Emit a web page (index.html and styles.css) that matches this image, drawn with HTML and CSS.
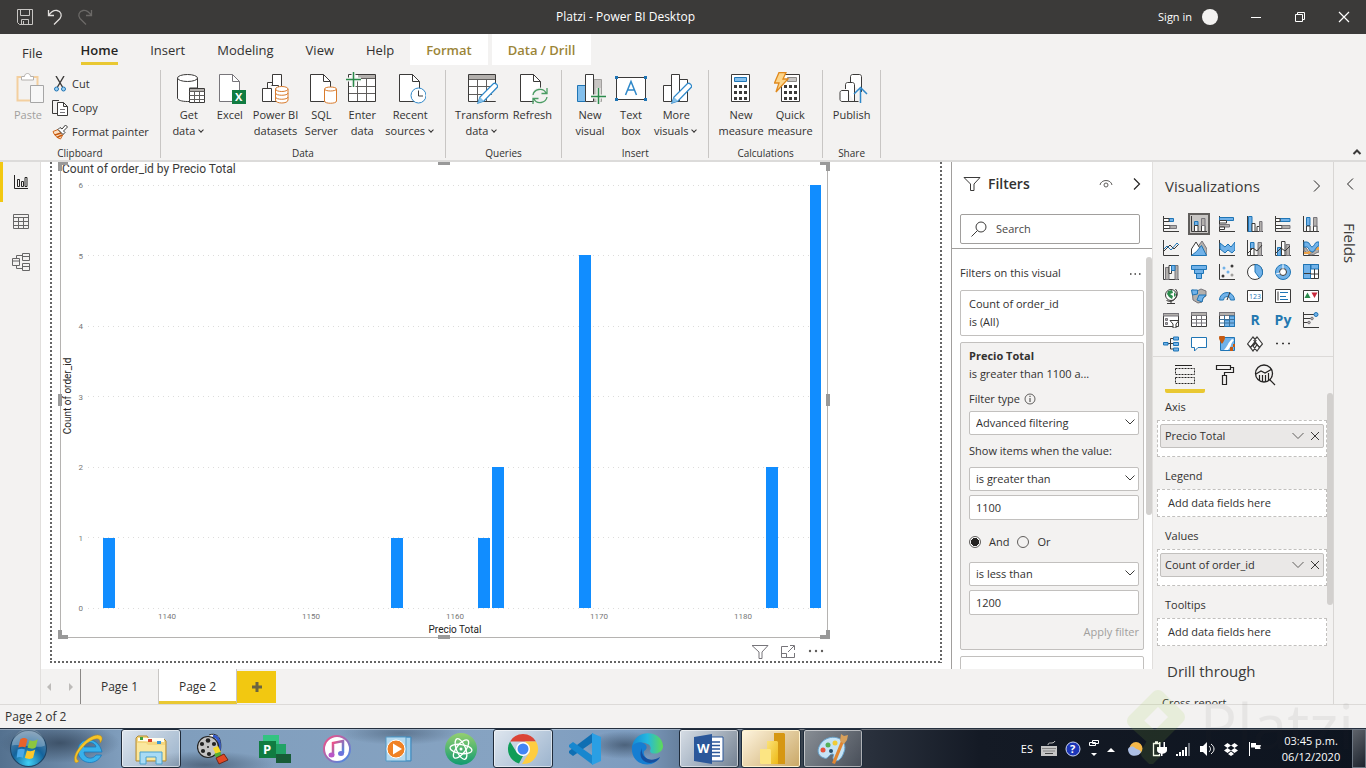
FILE: index.html
```html
<!DOCTYPE html>
<html lang="en">
<head>
    <meta charset="UTF-8">
    <meta name="viewport" content="width=device-width, initial-scale=1.0">
    <title>Platzi - Power BI Desktop</title>
    <link rel="stylesheet" href="styles.css">
</head>
<body>
    <header class="title-bar">
        <div class="quick-tools">
            <button aria-label="Save"><svg width="16" height="16" viewBox="0 0 16 16"><path d="M.5.5h15v15H2.500l-2-2zM3.500.500v6h9v-6M4.500 15.500v-5h7v5M6.500 12v3.500" fill="none" stroke="#c8c6c4"/></svg></button>
            <button aria-label="Undo"><svg width="16" height="16" viewBox="0 0 16 16"><path d="M1.500 1v5.500H7M1.500 6.500C4 3 7 1 10 1.500c4 .6 5.500 5 3 8L7 15.500" fill="none" stroke="#e1dfdd" stroke-width="1.300"/></svg></button>
            <button aria-label="Redo"><svg width="16" height="16" viewBox="0 0 16 16"><path d="M14.500 1v5.500H9M14.500 6.500C12 3 9 1 6 1.500c-4 .6-5.500 5-3 8L9 15.500" fill="none" stroke="#6b6967" stroke-width="1.300"/></svg></button>
        </div>
        <h1 class="window-title">Platzi - Power BI Desktop</h1>
        <div class="window-tools">
            <button class="sign-in">Sign in <span class="avatar"></span></button>
            <button aria-label="Minimize"><svg width="12" height="12" viewBox="0 0 12 12"><path d="M1 6.500h10" stroke="#fff"/></svg></button>
            <button aria-label="Restore"><svg width="12" height="12" viewBox="0 0 12 12"><path d="M1.500 3.500h7v7h-7zM3.500 3V1.500h7v7H9" fill="none" stroke="#fff"/></svg></button>
            <button aria-label="Close"><svg width="12" height="12" viewBox="0 0 12 12"><path d="M1 1l10 10M11 1L1 11" stroke="#fff" stroke-width="1.200"/></svg></button>
        </div>
    </header>

    <nav class="menu-tabs">
        <button class="file-tab">File</button>
        <button class="active">Home</button>
        <button>Insert</button>
        <button>Modeling</button>
        <button>View</button>
        <button>Help</button>
        <button class="context-tab">Format</button>
        <button class="context-tab">Data / Drill</button>
    </nav>

    <section class="ribbon">
        <div class="group">
            <div class="group-items">
                <button class="tool disabled">
                    <svg width="32" height="32" viewBox="0 0 32 32"><path d="M9 5H5.500v23.500h13M21 5h4.500v9" fill="none" stroke="#f3cf9f" stroke-width="2"/><path d="M9.500 8V4.500h3c0-4 6-4 6 0h3V8z" fill="#fff" stroke="#b3b0ad"/><path d="M18.500 13.500h13v17h-13z" fill="#f7f7f7" stroke="#a6a6a6"/></svg>
                    <span>Paste</span>
                </button>
                <div class="small-tools">
                    <button><svg width="16" height="16" viewBox="0 0 16 16"><path d="M4 0l6.500 11M12 0L5.500 11" stroke="#3b3a39" stroke-width="1.400"/><circle cx="4.500" cy="13" r="2" fill="#9cd0f2" stroke="#1f75b5"/><circle cx="11.500" cy="13" r="2" fill="#9cd0f2" stroke="#1f75b5"/></svg>Cut</button>
                    <button><svg width="16" height="16" viewBox="0 0 16 16"><path d="M5 13.500H.5V.5h6.500" fill="none" stroke="#3b3a39"/><path d="M5.500 2.500h6l4 4v9h-10zM11.500 2.500v4h4" fill="#fff" stroke="#3b3a39"/><path d="M8 9.500h5M8 12.500h5" stroke="#77757a"/></svg>Copy</button>
                    <button><svg width="16" height="16" viewBox="0 0 16 16"><path d="M1 7.500L6 5.500l5 5L8.500 15C5 14 2 11 1 7.500z" fill="#fbe0c4" stroke="#d2691e"/><path d="M3 11l6-2M5 13.500l5-2.500" stroke="#c55a11" stroke-width="1.500"/><path d="M6 5.500L8 3.500l2 1.500 3.500-4 2 2L11.500 7l1.500 1.500-2 2z" fill="#fff" stroke="#3b3a39"/></svg>Format painter</button>
                </div>
            </div>
            <div class="group-name">Clipboard</div>
        </div>
        <div class="group roomy">
            <div class="group-items">
                <button class="tool">
                    <svg width="32" height="32" viewBox="0 0 32 32"><path d="M4.500 6v20c0 2 4 3.500 10 3.500h2V16h8V6" fill="#fff" stroke="#3b3a39"/><ellipse cx="14.500" cy="6" rx="10" ry="3.500" fill="#fff" stroke="#3b3a39"/><path d="M16.500 16.500h15v14h-15z" fill="#fff" stroke="#3b3a39"/><path d="M17 17h14v2.500H17z" fill="#b3b0ad"/><path d="M16.500 19.500h15M16.500 23.500h15M16.500 27.500h15M21.500 20v10.500M26.500 20v10.500" stroke="#605e5c"/></svg>
                    <span>Get</span><span>data<i class="caret"></i></span>
                </button>
                <button class="tool">
                    <svg width="32" height="32" viewBox="0 0 32 32"><path d="M5.500 2.500h13l7 7v20h-20z" fill="#fff" stroke="#77757a"/><path d="M18.500 2.500v7h7" fill="none" stroke="#77757a"/><path d="M18 18h14v14H18z" fill="#107c41"/><text x="21" y="29" class="badge-x">X</text></svg>
                    <span>Excel</span>
                </button>
                <button class="tool">
                    <svg width="32" height="32" viewBox="0 0 32 32"><path d="M12.500 14V2.500h9V14M7.500 16v-5.500h5" fill="#fff" stroke="#3b3a39"/><path d="M7.500 16.500V11M2.500 16.500h9v13h-9zM11.500 13.500h7v16h-7" fill="#fff" stroke="#3b3a39"/><path d="M15.500 17v11c0 4 12.500 4 12.500 0V17" fill="#fff" stroke="#d97b2c"/><ellipse cx="21.750" cy="17" rx="6.250" ry="2.500" fill="#fff" stroke="#d97b2c"/><path d="M15.500 21c0 3 12.500 3 12.500 0M15.500 25c0 3 12.500 3 12.500 0" fill="none" stroke="#d97b2c"/></svg>
                    <span>Power BI</span><span>datasets</span>
                </button>
                <button class="tool">
                    <svg width="32" height="32" viewBox="0 0 32 32"><path d="M5.500 2.500h13l7 7v20h-20z" fill="#fff" stroke="#3b3a39"/><path d="M18.500 2.500v7h7" fill="none" stroke="#3b3a39"/><path d="M19.500 17v12c0 3 12 3 12 0V17" fill="#fff" stroke="#d97b2c"/><ellipse cx="25.500" cy="17" rx="6" ry="2" fill="#fff" stroke="#d97b2c"/></svg>
                    <span>SQL</span><span>Server</span>
                </button>
                <button class="tool">
                    <svg width="32" height="32" viewBox="0 0 32 32"><path d="M2.500 2.500h27v27h-27z" fill="#fff" stroke="#3b3a39"/><path d="M12 3h17v3H12z" fill="#b3b0ad"/><path d="M3 14.500h26M3 21.500h26M11.500 7v22M20.500 7v22M12 6.500h17" stroke="#605e5c"/><path d="M0 7.500h15M7.500 0v15" stroke="#f3f2f1" stroke-width="4"/><path d="M0 7.500h15M7.500 0v15" stroke="#2b8a4b" stroke-width="1.500"/></svg>
                    <span>Enter</span><span>data</span>
                </button>
                <button class="tool">
                    <svg width="32" height="32" viewBox="0 0 32 32"><path d="M5.500 2.500h13l7 7v20h-20z" fill="#fff" stroke="#3b3a39"/><path d="M18.500 2.500v7h7" fill="none" stroke="#3b3a39"/><circle cx="24.500" cy="23.500" r="7.500" fill="#fff" stroke="#2f88c9"/><path d="M24.500 18.500v5.500h4.500" fill="none" stroke="#3b3a39"/></svg>
                    <span>Recent</span><span>sources<i class="caret"></i></span>
                </button>
            </div>
            <div class="group-name">Data</div>
        </div>
        <div class="group snug">
            <div class="group-items">
                <button class="tool">
                    <svg width="32" height="32" viewBox="0 0 32 32"><path d="M2.500 2.500h27v27h-27z" fill="#fff" stroke="#3b3a39"/><path d="M3 3h26v4H3z" fill="#b3b0ad"/><path d="M3 14.500h26M3 22.500h26M11.500 7v22M20.500 7v22M3 7.500h26" stroke="#605e5c"/><path d="M23 29h9V9z" fill="#f3f2f1"/><path d="M12 31l2-6L27.500 11.500c2-1 4.500 1.500 4 3.500L18 29z" fill="#fff" stroke="#2f88c9" stroke-width="1.300"/><path d="M12 31l2-6 4 4z" fill="#85c1ea"/></svg>
                    <span>Transform</span><span>data<i class="caret"></i></span>
                </button>
                <button class="tool">
                    <svg width="32" height="32" viewBox="0 0 32 32"><path d="M4.500 2.500h13l7 7v20h-20z" fill="#fff" stroke="#3b3a39"/><path d="M17.500 2.500v7h7" fill="none" stroke="#3b3a39"/><circle cx="24" cy="24" r="8.500" fill="#f3f2f1"/><path d="M17 23c1-6 10-8 13-2M31 16v5.500h-5.500M31 25c-1 6-10 8-13 2M17 32v-5.500h5.500" fill="none" stroke="#4a9c63" stroke-width="1.300"/></svg>
                    <span>Refresh</span>
                </button>
            </div>
            <div class="group-name">Queries</div>
        </div>
        <div class="group roomy">
            <div class="group-items">
                <button class="tool">
                    <svg width="32" height="32" viewBox="0 0 32 32"><path d="M3.500 13.500h8v16h-8z" fill="#83bfec" stroke="#1f75b5"/><path d="M20 7.500h7.500v22H20z" fill="#c8c6c4" stroke="#a19f9d"/><path d="M11.500 2.500h8v27h-8z" fill="#fff" stroke="#3b3a39"/><path d="M17 24.500h15M24.500 16v16" stroke="#f3f2f1" stroke-width="4"/><path d="M17 24.500h15M24.500 16v16" stroke="#2b8a4b" stroke-width="1.500"/></svg>
                    <span>New</span><span>visual</span>
                </button>
                <button class="tool">
                    <svg width="32" height="32" viewBox="0 0 32 32"><path d="M1.500 5.500h29v22h-29z" fill="#fff" stroke="#3b3a39"/><path d="M0 4h3v3H0zM29 4h3v3h-3zM0 26h3v3H0zM29 26h3v3h-3z" fill="#1f75b5"/><path d="M10.500 23L16 9.500 21.500 23M12.500 18h7" fill="none" stroke="#2f88c9" stroke-width="1.500"/></svg>
                    <span>Text</span><span>box</span>
                </button>
                <button class="tool">
                    <svg width="32" height="32" viewBox="0 0 32 32"><path d="M3.500 13.500h8v16h-8zM19.500 7.500h8v22h-8zM11.500 2.500h8v27h-8z" fill="#fff" stroke="#3b3a39"/><path d="M12 31l2-6L27.500 11.500c2-1 4.500 1.500 4 3.500L18 29z" fill="#fff" stroke="#2f88c9" stroke-width="1.300"/><path d="M12 31l2-6 4 4z" fill="#85c1ea"/></svg>
                    <span>More</span><span>visuals<i class="caret"></i></span>
                </button>
            </div>
            <div class="group-name">Insert</div>
        </div>
        <div class="group snug">
            <div class="group-items">
                <button class="tool">
                    <svg width="32" height="32" viewBox="0 0 32 32"><path d="M6.500 2.500h18v27h-18z" fill="#fff" stroke="#3b3a39"/><path d="M9.500 5.500h12v4h-12z" fill="#83bfec" stroke="#1f75b5"/><path d="M9 14.500h13M9 20.500h13M9 26.500h13" stroke="#3b3a39" stroke-width="3" stroke-dasharray="3 2"/></svg>
                    <span>New</span><span>measure</span>
                </button>
                <button class="tool">
                    <svg width="32" height="32" viewBox="0 0 32 32"><path d="M7.500 2.500h18v27h-18z" fill="#fff" stroke="#3b3a39"/><path d="M13.500 5.500h9v4h-9z" fill="#c8c6c4" stroke="#8a8886"/><path d="M10 14.500h13M10 20.500h13M10 26.500h13" stroke="#3b3a39" stroke-width="3" stroke-dasharray="3 2"/><path d="M5 .5h7L9 7h5L2 20l3-9H.5z" fill="#fcd58a" stroke="#e08a1e" stroke-width="1.300"/></svg>
                    <span>Quick</span><span>measure</span>
                </button>
            </div>
            <div class="group-name">Calculations</div>
        </div>
        <div class="group">
            <div class="group-items">
                <button class="tool">
                    <svg width="32" height="32" viewBox="0 0 32 32"><path d="M14.500 11V4.500c0-1 1-2 2-2h7c1 0 2 1 2 2V20M9.500 17v-4.500c0-1 1-2 2-2h5c1 0 2 1 2 2v17" fill="#fff" stroke="#3b3a39"/><path d="M6 18.500h6.500v11H6c-1 0-2-1-2-2v-7c0-1 1-2 2-2zM12.500 29.500h10" fill="#fff" stroke="#3b3a39"/><path d="M24.500 31V17M18 22l6.500-6.500L31 22" fill="none" stroke="#2f88c9" stroke-width="1.500"/></svg>
                    <span>Publish</span>
                </button>
            </div>
            <div class="group-name">Share</div>
        </div>
        <button class="collapse" aria-label="Collapse ribbon"><svg width="10" height="8" viewBox="0 0 10 8"><path d="M1.500 6L5 2.500 8.500 6" fill="none" stroke="#3b3a39" stroke-width="2"/></svg></button>
    </section>

    <main class="workspace">
        <nav class="view-rail">
            <button class="active" aria-label="Report view"><svg width="16" height="16" viewBox="0 0 16 16"><path d="M1.500 1v13.500H15M4.500 5.500h2v7h-2zM8.500 7.500h2v5h-2zM12 3.500h2v9h-2z" fill="none" stroke="#252423"/></svg></button>
            <button aria-label="Data view"><svg width="18" height="16" viewBox="0 0 18 16"><path d="M1.500.5h15v14h-15zM1 3.500h16M1 7.500h16M1 11.500h16M6.500 4v11M11.500 4v11" fill="none" stroke="#666"/></svg></button>
            <button aria-label="Model view"><svg width="20" height="18" viewBox="0 0 20 18"><path d="M1.500 5.500h7v7h-7zM1 8h8M11.500.5h7v7h-7zM11 3.500h8M11.500 10.500h7v7h-7zM11 13.500h8M5.500 5V2.500H11M5.500 13v2.500H11" fill="none" stroke="#666"/></svg></button>
        </nav>

        <div class="report">
            <div class="report-top">
                <section class="canvas">
                    <div class="report-page">
                        <svg class="chart" viewBox="0 0 772 478" role="img" aria-label="Count of order_id by Precio Total">
                            <path class="frame" d="M2.500 1V475.500H769.500V1"/>
                            <text class="chart-title" x="4" y="11">Count of order_id by Precio Total</text>
                            <g class="grid">
                                <path d="M30 23.500H764M30 93.500H764M30 164.500H764M30 234.500H764M30 305.500H764M30 375.500H764M30 446.500H764"/>
                            </g>
                            <g class="ticks-y">
                                <text x="25" y="26">6</text>
                                <text x="25" y="97">5</text>
                                <text x="25" y="167">4</text>
                                <text x="25" y="238">3</text>
                                <text x="25" y="308">2</text>
                                <text x="25" y="379">1</text>
                                <text x="25" y="449">0</text>
                            </g>
                            <g class="bars">
                                <rect x="45" y="376" width="12" height="70"/>
                                <rect x="333" y="376" width="12" height="70"/>
                                <rect x="420" y="376" width="12" height="70"/>
                                <rect x="434" y="305" width="12" height="141"/>
                                <rect x="521" y="93" width="12" height="353"/>
                                <rect x="708" y="305" width="12" height="141"/>
                                <rect x="752" y="23" width="11" height="423"/>
                            </g>
                            <g class="ticks-x">
                                <text x="109" y="457">1140</text>
                                <text x="253" y="457">1150</text>
                                <text x="397" y="457">1160</text>
                                <text x="541" y="457">1170</text>
                                <text x="685" y="457">1180</text>
                            </g>
                            <text class="axis-name" x="397" y="471">Precio Total</text>
                            <text class="axis-name" transform="translate(13 234) rotate(-90)">Count of order_id</text>
                            <path class="handles" d="M0 0h10v3H4v6H0zM772 0h-10v3h6v6h4zM0 477h10v-4H4v-5H0zM772 477h-10v-4h6v-5h4zM380 0h12v3h-12zM380 473h12v4h-12zM0 232h4v12H0zM768 232h4v12h-4z"/>
                        </svg>
                        <div class="visual-tools">
                            <button aria-label="Filters"><svg width="18" height="16" viewBox="0 0 18 16"><path d="M1 1.500h16L11 8v6.500H8V8z" fill="none" stroke="#77757a"/></svg></button>
                            <button aria-label="Focus mode"><svg width="16" height="16" viewBox="0 0 16 16"><path d="M8 2.500H1.500v11h13V9M1.500 9.500h5v4M8 8l6-6M10 1.500h4.500V6" fill="none" stroke="#77757a"/></svg></button>
                            <button aria-label="More options"><svg width="18" height="16" viewBox="0 0 18 16"><g fill="#605e5c"><circle cx="3" cy="7" r="1.200"/><circle cx="9" cy="7" r="1.200"/><circle cx="15" cy="7" r="1.200"/></g></svg></button>
                        </div>
                    </div>
                </section>

                <aside class="filters">
                    <div class="filters-head">
                        <svg width="18" height="16" viewBox="0 0 18 16"><path d="M1 1.500h16L11 8v6.500H7.500V8z" fill="none" stroke="#3b3a39"/></svg>
                        <h2>Filters</h2>
                        <button aria-label="Hide filter pane"><svg width="14" height="10" viewBox="0 0 14 10"><path d="M1 6c1-6 11-6 12 0" fill="none" stroke="#605e5c"/><circle cx="7" cy="6" r="2" fill="none" stroke="#605e5c"/></svg></button>
                        <button aria-label="Collapse filters"><svg width="8" height="14" viewBox="0 0 8 14"><path d="M1 1.500L6.500 7 1 12.500" fill="none" stroke="#252423" stroke-width="1.200"/></svg></button>
                    </div>
                    <label class="search">
                        <svg width="16" height="16" viewBox="0 0 16 16"><circle cx="10" cy="6" r="5" fill="none" stroke="#3b3a39"/><path d="M6.500 9.500L.5 15.500" stroke="#3b3a39"/></svg>
                        <input type="text" placeholder="Search" aria-label="Search filters">
                    </label>
                    <div class="filter-list">
                        <div class="filter-section">
                            <span>Filters on this visual</span>
                            <button aria-label="More options"><svg width="12" height="8" viewBox="0 0 12 8"><path d="M1 5h1.500M5.500 5H7M10 5h1.500" stroke="#3b3a39" stroke-width="1.500"/></svg></button>
                        </div>
                        <div class="card">
                            <p>Count of order_id</p>
                            <p>is (All)</p>
                        </div>
                        <form class="card open">
                            <p class="field-name">Precio Total</p>
                            <p>is greater than 1100 a...</p>
                            <label class="caption" for="filter-type">Filter type <svg width="12" height="12" viewBox="0 0 12 12"><circle cx="6" cy="6" r="5" fill="none" stroke="#3b3a39" stroke-width=".8"/><path d="M6 5v4M6 2.800v1.200" stroke="#3b3a39"/></svg></label>
                            <div class="select-box"><select id="filter-type"><option>Advanced filtering</option></select><svg width="10" height="6" viewBox="0 0 10 6"><path d="M.5.5L5 5 9.500.5" fill="none" stroke="#3b3a39"/></svg></div>
                            <label class="caption show-items" for="first-rule">Show items when the value:</label>
                            <div class="select-box"><select id="first-rule"><option>is greater than</option></select><svg width="10" height="6" viewBox="0 0 10 6"><path d="M.5.5L5 5 9.500.5" fill="none" stroke="#3b3a39"/></svg></div>
                            <input class="value" type="text" value="1100" aria-label="First value">
                            <div class="joiner">
                                <label><input type="radio" name="join" checked> And</label>
                                <label><input type="radio" name="join"> Or</label>
                            </div>
                            <div class="select-box"><select aria-label="Second rule"><option>is less than</option></select><svg width="10" height="6" viewBox="0 0 10 6"><path d="M.5.5L5 5 9.500.5" fill="none" stroke="#3b3a39"/></svg></div>
                            <input class="value" type="text" value="1200" aria-label="Second value">
                            <button class="apply" type="button">Apply filter</button>
                        </form>
                        <div class="card next"></div>
                        <span class="scroll-thumb"></span>
                    </div>
                </aside>
            </div>

            <nav class="page-tabs">
                <div class="page-arrows">
                    <button aria-label="Previous page"><svg width="6" height="10" viewBox="0 0 6 10"><path d="M5 1v8L1 5z" fill="#bdbbb9"/></svg></button>
                    <button aria-label="Next page"><svg width="6" height="10" viewBox="0 0 6 10"><path d="M1 1v8l4-4z" fill="#bdbbb9"/></svg></button>
                </div>
                <button class="page">Page 1</button>
                <button class="page current">Page 2</button>
                <button class="add-page" aria-label="New page"><svg width="12" height="12" viewBox="0 0 12 12"><path d="M6 1v10M1 6h10" stroke="#6b6440" stroke-width="3"/></svg></button>
            </nav>
        </div>

        <aside class="visuals">
            <div class="visuals-head">
                <h2>Visualizations</h2>
                <button aria-label="Collapse visualizations"><svg width="8" height="14" viewBox="0 0 8 14"><path d="M1 1.500L6.500 7 1 12.500" fill="none" stroke="#252423"/></svg></button>
            </div>
            <div class="visual-grid">
                <button aria-label="Stacked bar chart"><svg viewBox="0 0 16 16"><path class="ax" d="M.5 0v15.500H16"/><path class="b" d="M6 2.500h4.500v3H6z"/><path class="w" d="M.5 2.500H6v3H.5zM.5 9.500H7v3H.5z"/><path class="g" d="M7 9.500h6.500v3H7z"/></svg></button>
                <button class="picked" aria-label="Stacked column chart"><svg viewBox="0 0 16 16"><path class="ax" d="M.5 0v15.500H16"/><path class="b" d="M3.500 5.500h3.500v4H3.500z"/><path class="w" d="M3.500 9.500H7v6H3.500zM10.500 9.500H14v6h-3.500z"/><path class="g" d="M10.500 2.500H14v7h-3.500z"/></svg></button>
                <button aria-label="Clustered bar chart"><svg viewBox="0 0 16 16"><path class="ax" d="M.5 0v15.500H16"/><path class="b" d="M.5 1.500h14v3H.5z"/><path class="w" d="M.5 4.500h7v2.500h-7z"/><path class="g" d="M.5 8.500h10v2.500H.5z"/><path class="w" d="M.5 11h5v2.500h-5z"/></svg></button>
                <button aria-label="Clustered column chart"><svg viewBox="0 0 16 16"><path class="ax" d="M.5 0v15.500H16"/><path class="b" d="M1.500.5h3.500v15H1.500z"/><path class="w" d="M5 7.500h3v8H5zM10 10.500h2.500v5H10z"/><path class="g" d="M12.500 5.500H15v10h-2.500z"/></svg></button>
                <button aria-label="100% stacked bar chart"><svg viewBox="0 0 16 16"><path class="ax" d="M.5 0v15.500H16"/><path class="b" d="M5 2.500h10v3H5z"/><path class="w" d="M.5 2.500H5v3H.5zM.5 9.500H7v3H.5z"/><path class="g" d="M7 9.500h8v3H7z"/></svg></button>
                <button aria-label="100% stacked column chart"><svg viewBox="0 0 16 16"><path class="ax" d="M.5 0v15.500H16"/><path class="b" d="M3.500 1.500H7v8H3.500z"/><path class="w" d="M3.500 10H7v5.500H3.500zM10.500 10H14v5.500h-3.500z"/><path class="g" d="M10.500 1.500H14V10h-3.500z"/></svg></button>

                <button aria-label="Line chart"><svg viewBox="0 0 16 16"><path class="ax" d="M.5 0v15.500H16M1 11l6-6 4 4 5-5"/><path class="bl" d="M1 9l3-3 4 4 6-7 2 2"/></svg></button>
                <button aria-label="Area chart"><svg viewBox="0 0 16 16"><path class="g" d="M1 15l10-14 5 8v6z"/><path class="w" d="M.5 15.500V9L5 2l5 8v5.500z"/><path class="b" d="M.5 15.500l5-4 5-6 5 10z"/></svg></button>
                <button aria-label="Stacked area chart"><svg viewBox="0 0 16 16"><path class="ax" d="M.5 0v15.500H16"/><path class="b" d="M1 3l5 4 3-3 3 3 4-5v8l-3 3-4-3-3 3-5-4z"/></svg></button>
                <button aria-label="Line and stacked column chart"><svg viewBox="0 0 16 16"><path class="ax" d="M.5 0v15.500H16"/><path class="b" d="M3.500 2.500H7v6H3.500z"/><path class="w" d="M3.500 8.500H7v7H3.500z"/><path class="g" d="M11 2.500h3.500v13H11z"/><path class="ax" d="M1 13l5-5 4 3 5-6"/></svg></button>
                <button aria-label="Line and clustered column chart"><svg viewBox="0 0 16 16"><path class="ax" d="M.5 0v15.500H16"/><path class="b" d="M2.500 7.500H6v8H2.500z"/><path class="w" d="M6.500 1.500H10v14H6.500z"/><path class="g" d="M11 4.500h3.500v11H11z"/><path class="ax" d="M1 13l5-5 4 3 5-5"/></svg></button>
                <button aria-label="Ribbon chart"><svg viewBox="0 0 16 16"><path class="ax" d="M.5 0v15.500H16"/><path class="g" d="M1 7c3 0 4 6 7 6s5-5 8-5v4c-3 0-4 3-8 3s-4-4-7-4z"/><path class="o" d="M1 12h3c3 0 5-5 8-5h4v3h-4c-2 0-4 4-7 4H1z"/><path class="b" d="M1 2h3c3 0 3 5 5 5s3-5 5-5h2v4c-3 0-4 6-7 6s-3-5-5-5H1z"/></svg></button>

                <button aria-label="Waterfall chart"><svg viewBox="0 0 16 16"><path class="ax" d="M.5 0v15.500H16"/><path class="g" d="M2.500 3.500H6v12H2.500zM12 1.500h3v14h-3z"/><path class="w" d="M6 1.500h2.500v8H6z"/><path class="b" d="M8.500 1.500H12v5H8.500z"/></svg></button>
                <button aria-label="Funnel chart"><svg viewBox="0 0 16 16"><path class="b" d="M.5 1.500h15v4H.5zM3.500 5.500h9v4h-9zM5.500 9.500h5v5h-5z"/></svg></button>
                <button aria-label="Scatter chart"><svg viewBox="0 0 16 16"><path class="ax" d="M.5 0v15.500H16"/><g fill="#3b3a39"><circle cx="13" cy="2" r="1.500"/><circle cx="4" cy="12" r="1.500"/></g><g fill="#71b2e9"><circle cx="5" cy="4" r="1.500"/><circle cx="9" cy="8" r="1.500"/></g><circle cx="13" cy="11" r="1.500" fill="#a19f9d"/></svg></button>
                <button aria-label="Pie chart"><svg viewBox="0 0 16 16"><circle class="w" cx="8" cy="8" r="7.500"/><path class="b" d="M8 .5A7.500 7.500 0 0 1 12.500 14L8 8z"/></svg></button>
                <button aria-label="Donut chart"><svg viewBox="0 0 16 16"><circle class="b" cx="8" cy="8" r="7.500"/><circle class="w" cx="8" cy="8" r="3.500"/><path d="M8 0v5M1 10l4-1" stroke="#fff"/></svg></button>
                <button aria-label="Treemap"><svg viewBox="0 0 16 16"><path class="w" d="M.5.5h15v14H.5z"/><path class="b" d="M.5.5h7v14h-7zM8 .5h7.500V5H8z"/><path class="ax" d="M1 9.500h7M11.500 5v9.500M8 10h8"/></svg></button>

                <button aria-label="Map"><svg viewBox="0 0 16 16"><circle class="w" cx="8" cy="7" r="5.500"/><path d="M5 3l4-1 1 3-3 1 3 2-1 3-3-2-2-3zM11 4l2 3-2 2z" fill="#2b8a4b"/><path class="ax" d="M12.500 1a7.500 7.500 0 0 1-9 11.500M8 13v2.500M4 15.500h8"/></svg></button>
                <button aria-label="Filled map"><svg viewBox="0 0 16 16"><path class="g" d="M1 2l5 1 4-2 5 2v5l-3 2-1 4-4 1-5-3z"/><path class="b" d="M.5 2h6v4l-5 1zM8 7h7l-3 3-1 4-5-2z"/></svg></button>
                <button aria-label="Gauge"><svg viewBox="0 0 16 16"><path class="b" d="M.5 12a7.500 7.500 0 0 1 15 0h-4a3.500 3.500 0 0 0-7 0z"/><path class="ax" d="M8 12l3-8"/></svg></button>
                <button aria-label="Card"><svg viewBox="0 0 16 16"><path class="w" d="M.5 2.500h15v11H.5z"/><text x="2" y="11" class="digits">123</text></svg></button>
                <button aria-label="Multi-row card"><svg viewBox="0 0 16 16"><path class="w" d="M.5 1.500h15v13H.5z"/><path class="bl" d="M5 4.500h8M5 8.500h6M5 11.500h8"/><path class="ax" d="M3 3.500v9"/></svg></button>
                <button aria-label="KPI"><svg viewBox="0 0 16 16"><path class="w" d="M.5 2.500h15v11H.5z"/><path d="M1.500 10L4.500 4.500 7.500 10z" fill="#2b8a4b"/><path d="M8.500 4.500h6l-3 5.500z" fill="#c8273b"/></svg></button>

                <button aria-label="Slicer"><svg viewBox="0 0 16 16"><path class="w" d="M.5 1.500h15v13H.5z"/><path class="g" d="M.5 1.500h15V4H.5zM2.500 6.500h2v2h-2zM2.500 10.500h2v2h-2z"/><path class="w" d="M7 8.500h9l-3 3.500v4h-3v-4z"/></svg></button>
                <button aria-label="Table"><svg viewBox="0 0 16 16"><path class="w" d="M.5.5h15v14H.5z"/><path class="g" d="M.5.5h15v3H.5z"/><path d="M.5 7.500h15M.5 11h15M5.500 3v11.500M10.500 3v11.500" stroke="#77757a"/></svg></button>
                <button aria-label="Matrix"><svg viewBox="0 0 16 16"><path class="w" d="M.5.5h15v14H.5z"/><path class="g" d="M.5.5h15v3H.5z"/><path class="b" d="M10.500 4h5v10.500h-10V8h5z"/><path d="M.5 7.500h15M.5 11h15M5.500 3v11.500M10.500 3v11.500" stroke="#3b6f98"/></svg></button>
                <button aria-label="R script visual"><b>R</b></button>
                <button aria-label="Python visual"><b>Py</b></button>
                <button aria-label="Key influencers"><svg viewBox="0 0 16 16"><path class="ax" d="M.5 0v15.500H16M1 2.500h10M1 6.500h7M1 10.500h4"/><circle class="b" cx="13" cy="2.500" r="2"/><circle class="g" cx="9" cy="6.500" r="1.300"/><circle class="g" cx="6" cy="10.500" r="1.300"/></svg></button>

                <button aria-label="Decomposition tree"><svg viewBox="0 0 16 16"><path class="ax" d="M5 7.500h5M7.500 2.500v10.500M7.500 2.500H10M7.500 13H10"/><path class="b" d="M.5 6.500H5V9H.5zM10.500 1h5v3h-5zM10.500 6.500h5v3h-5zM10.500 12h5v3h-5z"/></svg></button>
                <button aria-label="Q&amp;A"><svg viewBox="0 0 16 16"><path d="M.5 1.500h15v10H7L3.500 15v-3.500h-3z" fill="#fff" stroke="#1f75b5"/></svg></button>
                <button aria-label="ArcGIS map"><svg viewBox="0 0 16 16"><path class="b" d="M1.500 1.500h14v13h-14z"/><path d="M5 14c4-4 3-6 8-11l2 1c-4 4-2 6-6 10z" fill="#fff"/><path d="M0 2a3 3 0 0 1 6 0c0 2-3 6-3 6S0 4 0 2zM11 11h3v4h-3zM14 8h2v3h-2z" fill="#c55a11"/></svg></button>
                <button aria-label="Power Apps"><svg viewBox="0 0 16 16"><g fill="#fff" stroke="#3b3a39" stroke-width="1.200"><path d="M.5 8L6 1l3 3.500L3.500 11.500zM7 4.500L10 1l5.500 7-3 3.500z"/><path d="M3.500 11.500L8 6l2 2.500L6 15zM12.500 11.500L10 15 6 10l2.500-3z"/></g></svg></button>
                <button aria-label="More visuals"><svg viewBox="0 0 16 16"><path d="M1 7.500h2M7 7.500h2M13 7.500h2" stroke="#3b3a39" stroke-width="1.500"/></svg></button>
            </div>
            <div class="pane-tabs">
                <button class="active" aria-label="Fields"><svg width="22" height="22" viewBox="0 0 22 22"><path d="M1 1.500h17" stroke="#252423"/><path d="M1.500 4.500h19v6h-19zM1.500 13.500h19v6h-19z" fill="none" stroke="#252423" stroke-dasharray="2 1"/></svg></button>
                <button aria-label="Format"><svg width="22" height="22" viewBox="0 0 22 22"><path d="M2.500 1.500h14v4h-14zM16.500 3.500h3v5h-9v3M8.500 11.500h4v9h-4z" fill="none" stroke="#252423" stroke-width="1.200"/></svg></button>
                <button aria-label="Analytics"><svg width="22" height="22" viewBox="0 0 22 22"><circle cx="10" cy="9.500" r="8.500" fill="none" stroke="#252423" stroke-width="1.300"/><path d="M16 16l5 5M2 10l5-3 4 2 7-4M5.500 11v5M8.500 11v7M11.500 11v7M14.500 9v7" fill="none" stroke="#252423" stroke-width="1.200"/></svg></button>
            </div>
            <div class="wells">
                <h3>Axis</h3>
                <div class="well">
                    <div class="chip">Precio Total
                        <button aria-label="Field options"><svg width="12" height="8" viewBox="0 0 12 8"><path d="M.5 1L6 6.500 11.500 1" fill="none" stroke="#605e5c"/></svg></button>
                        <button aria-label="Remove field"><svg width="10" height="10" viewBox="0 0 10 10"><path d="M1 1l8 8M9 1L1 9" stroke="#3b3a39"/></svg></button>
                    </div>
                </div>
                <h3>Legend</h3>
                <div class="well empty">Add data fields here</div>
                <h3>Values</h3>
                <div class="well">
                    <div class="chip">Count of order_id
                        <button aria-label="Field options"><svg width="12" height="8" viewBox="0 0 12 8"><path d="M.5 1L6 6.500 11.500 1" fill="none" stroke="#605e5c"/></svg></button>
                        <button aria-label="Remove field"><svg width="10" height="10" viewBox="0 0 10 10"><path d="M1 1l8 8M9 1L1 9" stroke="#3b3a39"/></svg></button>
                    </div>
                </div>
                <h3>Tooltips</h3>
                <div class="well empty">Add data fields here</div>
                <h2>Drill through</h2>
                <p>Cross-report</p>
                <span class="scroll-thumb"></span>
            </div>
        </aside>

        <aside class="fields">
            <button aria-label="Expand fields"><svg width="8" height="14" viewBox="0 0 8 14"><path d="M7 1.500L1.500 7 7 12.500" fill="none" stroke="#252423"/></svg></button>
            <h2>Fields</h2>
        </aside>
    </main>

    <footer class="status-bar">Page 2 of 2</footer>

    <div class="taskbar">
        <div class="apps">
            <button aria-label="Start"><svg viewBox="0 0 36 36"><defs><radialGradient id="orb" cx=".5" cy=".9" r=".9"><stop offset="0" stop-color="#3fd0f5"/><stop offset=".5" stop-color="#14639c"/><stop offset="1" stop-color="#6b8ba8"/></radialGradient></defs><circle cx="18" cy="18" r="17.500" fill="url(#orb)" stroke="#1d4364"/><path d="M2 15a16 16 0 0 1 32 0c-9 4-22-2-32 0z" fill="#fff" opacity=".25"/><path d="M10 9c3-2 5-1 7 0l-2 8c-2-1-4-1-7 0z" fill="#e8632b"/><path d="M19 10c3 1 5 1 8-1l-2 8c-3 2-5 1-8 0z" fill="#8cc63f"/><path d="M7.500 19c3-1 5-1 7 0l-2 8c-2-1-4-1-6 0z" fill="#4aa8e8"/><path d="M16.500 20c3 1 5 1 8-1l-2 8c-3 2-6 1-8 0z" fill="#fcc82a"/></svg></button>
            <button aria-label="Internet Explorer"><svg viewBox="0 0 32 32"><path d="M29 19H11c0 7 9 8 12 3h5.500C23 34 5 31 5 17.500S25 2 29 19zM11 14h12c-1-6-11-6-12 0z" fill="#38b1ea" stroke="#1879bd" stroke-width=".8"/><path d="M2 29C-2 18 20-3 28 3c2 2 1 5-1 7 1-8-10-3-15 2S0 26 6 28c-2 2-3 2-4 1z" fill="#f6c428" stroke="#bd8810" stroke-width=".5"/></svg></button>
            <button class="running" aria-label="Explorer"><svg viewBox="0 0 32 32"><path d="M1 28V5l2-2h9l2 3h15l2 2v20z" fill="#f5d77e" stroke="#b48b32"/><path d="M3 8V5h26v4z" fill="#fffdf0"/><path d="M5 4h3v3H5z" fill="#3ca13c"/><path d="M13 6h4v3h-4z" fill="#d9452c"/><path d="M22 8h4v3h-4z" fill="#3a96d8"/><path d="M2 10h9l2 2h17v15H2z" fill="#fae79e"/><path d="M5 31V19h22v12h-6v-7H11v7z" fill="#a8dbf5" stroke="#4aa0cc"/></svg></button>
            <button aria-label="Movie player"><svg viewBox="0 0 32 32"><path d="M12 2C26-3 26 18 20 26" fill="#fff" stroke="#222"/><path d="M16 3c8 1 7 12 5 18" fill="none" stroke="#3359c9" stroke-width="3"/><circle cx="11" cy="14" r="10.500" fill="#c5c5c5" stroke="#222" stroke-width="1.200"/><g fill="#222"><circle cx="11" cy="7.500" r="2.300"/><circle cx="5" cy="11" r="2.100"/><circle cx="6" cy="18" r="2.100"/><circle cx="12" cy="21" r="2.100"/><circle cx="17" cy="11" r="2.100"/><circle cx="11" cy="14" r="1"/></g><path d="M16 15l5-2 3 6-5 3z" fill="#f5d928"/><path d="M17 21l6-2 2 4-5 3z" fill="#53ae36"/><path d="M19 25l8-4 4 6-9 4z" fill="#e44924" stroke="#6e281b"/></svg></button>
            <button aria-label="Project"><svg viewBox="0 0 32 32"><path d="M4 2h16v9H4z" fill="#33c481"/><path d="M12 11h15v10H12z" fill="#21a366"/><path d="M17 21h15v9H17z" fill="#185c37"/><path d="M0 8h17v17H0z" fill="#107c41"/><text x="4" y="21" class="logo-letter">P</text></svg></button>
            <button aria-label="iTunes"><svg viewBox="0 0 32 32"><defs><linearGradient id="note" x2="1" y2="1"><stop stop-color="#f74d83"/><stop offset="1" stop-color="#3f8ee8"/></linearGradient></defs><circle cx="16" cy="16" r="13" fill="#fff" stroke="url(#note)" stroke-width="2"/><path d="M12 22V10l10-2v12" fill="none" stroke="url(#note)" stroke-width="2.500"/><ellipse cx="10.500" cy="22" rx="3" ry="2.500" fill="#ba55c7"/><ellipse cx="20" cy="20.500" rx="3" ry="2.500" fill="#6b73dc"/></svg></button>
            <button aria-label="Media player"><svg viewBox="0 0 32 32"><path d="M8 4h20v24H8z" fill="#78b8e2" stroke="#3d86b9"/><path d="M24 5v22M26 5v22" stroke="#d1e9f5"/><path d="M3 4h20v24H3z" fill="#b4d9ef" stroke="#5499c5"/><circle cx="13" cy="16" r="9" fill="#f08124" stroke="#fff"/><path d="M10 10.500v11l9-5.500z" fill="#fff"/></svg></button>
            <button aria-label="Atom"><svg viewBox="0 0 32 32"><defs><linearGradient id="atom" x2="0" y2="1"><stop stop-color="#94cf70"/><stop offset="1" stop-color="#109b70"/></linearGradient></defs><circle cx="16" cy="16" r="16" fill="url(#atom)"/><g fill="none" stroke="#fff" stroke-width="1.300"><ellipse cx="16" cy="16" rx="11" ry="4.500" transform="rotate(8 16 16)"/><ellipse cx="16" cy="16" rx="11" ry="4.500" transform="rotate(68 16 16)"/><ellipse cx="16" cy="16" rx="11" ry="4.500" transform="rotate(128 16 16)"/></g><circle cx="16" cy="16" r="1.500" fill="#fff"/></svg></button>
            <button class="running" aria-label="Chrome"><svg viewBox="0 0 32 32"><path d="M3 8.500a15 15 0 0 1 26 0H16z" fill="#db4437"/><path d="M3 8.500L10 20l6 3-4 7.500A15 15 0 0 1 3 8.500z" fill="#0f9d58"/><path d="M29 8.500a15 15 0 0 1-14 22.500L22.500 19 18 8.500z" fill="#ffcd40"/><circle cx="16" cy="16" r="7" fill="#fff"/><circle cx="16" cy="16" r="5.500" fill="#4285f4"/></svg></button>
            <button aria-label="Visual Studio Code"><svg viewBox="0 0 32 32"><path d="M24 0v9L4 23l-4-3v-2z" fill="#0f6fb3"/><path d="M0 12l4-3 20 14v9L0 14z" fill="#1787cf"/><path d="M23 0l9 4v24l-9 4z" fill="#2a9fe4"/></svg></button>
            <button aria-label="Edge"><svg viewBox="0 0 32 32"><defs><linearGradient id="edge" x2="1"><stop stop-color="#1589d5"/><stop offset=".5" stop-color="#24b8df"/><stop offset="1" stop-color="#5edb55"/></linearGradient></defs><path d="M1 14C4-5 31-3 32 13c0 9-13 9-13 5 4-8-10-12-18-4z" fill="url(#edge)"/><path d="M1 13c8-9 20 0 12 5-2 7 8 13 16 6-7 13-30 9-28-11z" fill="#167ed2"/><path d="M11 15c-2 8 7 16 18 9-6 11-25 6-18-9z" fill="#164f9f"/></svg></button>
            <button class="running" aria-label="Word"><svg viewBox="0 0 32 32"><path d="M15 4h15v24H15z" fill="#fff" stroke="#2b579a"/><path d="M18 9h9M18 12.500h9M18 16h9M18 19.500h9M18 23h9" stroke="#2b579a" stroke-width="1.300"/><path d="M1 4l18-3v30L1 28z" fill="#2b579a"/><text x="4" y="20" class="logo-letter">W</text></svg></button>
            <button class="running current" aria-label="Power BI"><svg viewBox="0 0 32 32"><defs><linearGradient id="pbi" x2="1" y2="1"><stop stop-color="#fbe278"/><stop offset="1" stop-color="#eeb915"/></linearGradient></defs><path d="M19 0h10l1 1v30H19z" fill="#d69712"/><path d="M12 8h10l1 1v22H12z" fill="url(#pbi)"/><path d="M5 16h10l1 1v14H6l-1-1z" fill="#fce583"/></svg></button>
            <button class="running" aria-label="Paint"><svg viewBox="0 0 32 32"><path d="M5 9c10-10 27-3 22 10-2 6-6 11-10 8-3-3 2-6-2-6-3 0-4 6-8 4C0 23-1 16 5 9z" fill="#c5e3f6" stroke="#67a1ca"/><circle cx="6" cy="17" r="2.500" fill="#e5533d"/><circle cx="11" cy="12" r="2.500" fill="#54b058"/><circle cx="18" cy="10" r="2.500" fill="#f1cc37"/><circle cx="14" cy="18" r="2" fill="#27506e"/><path d="M15 30L24 8l3 1-9 22z" fill="#e08632"/><path d="M23 8l1-7 3 2 4-1-1 5-3 4z" fill="#d8a05b"/></svg></button>
        </div>
        <div class="tray">
            <span>ES</span>
            <svg width="16" height="16" viewBox="0 0 16 16"><path d="M0 5h16v10H0z" fill="#c5c5c5"/><path d="M1.500 7.500h13M2.500 10h12" stroke="#444" stroke-dasharray="1 1"/><path d="M4 12.500h8" stroke="#444"/><path d="M7 4c0-4 5 0 7-4" fill="none" stroke="#c5c5c5"/></svg>
            <svg width="16" height="16" viewBox="0 0 16 16"><circle cx="8" cy="8" r="7" fill="#1c36b8" stroke="#ced8f3"/><text x="5" y="12" class="help-mark">?</text></svg>
            <svg width="10" height="18" viewBox="0 0 10 18"><path d="M3.500.500h6v3h-6zM.5 2.500h6v3h-6z" fill="#101827" stroke="#fff"/><path d="M2 13h6l-3 3z" fill="#fff"/></svg>
            <svg width="8" height="16" viewBox="0 0 8 16"><path d="M0 11h8L4 7z" fill="#fff"/></svg>
            <svg class="spaced" width="16" height="16" viewBox="0 0 16 16"><circle cx="9" cy="7.500" r="6.500" fill="#f5b849"/><path d="M1 8c2-3 5-3 7-1s5 1 6 4c-3 6-13 5-13-3z" fill="#acbfe5"/></svg>
            <svg width="16" height="16" viewBox="0 0 16 16"><path d="M8 2.500H2.500v12h6V13M4 1h3" fill="none" stroke="#fff" stroke-width="1.300"/><path d="M6 6h10v3c0 5-10 5-10 0zM8 1h1.500v5H8zM12.500 1H14v5h-1.500zM10 11h1.500v4H10z" fill="#fff"/></svg>
            <svg width="16" height="16" viewBox="0 0 16 16"><path d="M1 13h2v2H1zM4 11h2v4H4zM7 9h2v6H7zM10 6h2v9h-2z" fill="#fff"/><path d="M13 2h2v13h-2z" fill="#6b717b"/></svg>
            <svg width="16" height="16" viewBox="0 0 16 16"><path d="M1 5h3l4-4v14l-4-4H1z" fill="#fff"/><path d="M10 5c2 2 2 4 0 6M12 3c4 3 4 7 0 10" fill="none" stroke="#fff"/></svg>
            <svg width="16" height="16" viewBox="0 0 16 16"><path d="M4.500 2L8 4.500 4.500 7 1 4.500zM11.500 2L15 4.500 11.500 7 8 4.500zM4.500 7L8 9.500 4.500 12 1 9.500zM11.500 7L15 9.500 11.500 12 8 9.500zM8 10.500l3 2.500-3 2-3-2z" fill="#fff"/></svg>
            <svg width="16" height="16" viewBox="0 0 16 16"><path d="M2.500 1v14" stroke="#fff"/><path d="M4 2h5v2h5l-1 3 1 1H8V6.500H4z" fill="#fff"/></svg>
            <div class="clock"><span>03:45 p.m.</span><span>06/12/2020</span></div>
        </div>
        <button class="show-desktop" aria-label="Show desktop"></button>
    </div>

    <div class="brand-mark">
        <svg width="66" height="78" viewBox="0 0 66 78"><path d="M31 52L12 35 36 11l20 20-22 22-8 14 8 8" fill="none" stroke="#98ca3f" stroke-width="14" stroke-linejoin="round"/></svg>
        <span>Platzi</span>
    </div>
</body>
</html>
```
FILE: styles.css
```css
:root {
    --chrome: #f3f2f1;
    --dark: #3b3a39;
    --text: #323130;
    --line: #d2d0ce;
    --yellow: #f2c811;
    --bar-blue: #118dff;
}

* {
    margin: 0;
    padding: 0;
    box-sizing: border-box;
}

body {
    height: 100vh;
    display: flex;
    flex-direction: column;
    overflow: hidden;
    background: var(--chrome);
    color: var(--text);
    font: 11px/16px "Open Sans", "Noto Sans", sans-serif;
}

button, input, select {
    font: inherit;
    color: inherit;
    background: none;
    border: none;
    outline: none;
}

svg {
    display: block;
    flex: none;
}

/* title bar */
.title-bar {
    flex: none;
    display: flex;
    align-items: center;
    height: 34px;
    background: var(--dark);
    color: #fff;
}

.quick-tools {
    display: flex;
    gap: 14px;
    padding-left: 17px;
}

.window-title {
    flex: 1;
    text-align: center;
    font-size: 12px;
    font-weight: 400;
}

.window-tools {
    display: flex;
    align-items: center;
    gap: 32px;
    padding-right: 16px;
}

.sign-in {
    display: flex;
    align-items: center;
    gap: 10px;
}

.avatar {
    width: 16px;
    height: 16px;
    border-radius: 50%;
    background: #f3f2f1;
}

/* menu tabs */
.menu-tabs {
    flex: none;
    display: flex;
    height: 31px;
    padding-left: 6px;
    font-size: 13px;
}

.menu-tabs button {
    position: relative;
    padding: 0 16px;
}

.menu-tabs .file-tab {
    margin-right: 6px;
    padding-top: 6px;
}

.menu-tabs .active {
    font-weight: 600;
    color: #252423;
}

.menu-tabs .active::after {
    content: "";
    position: absolute;
    left: 16px;
    right: 16px;
    bottom: 0;
    height: 3px;
    background: #e9c832;
}

.menu-tabs .context-tab {
    margin-right: 4px;
    background: #fff;
    color: #9b8538;
    font-weight: 600;
}

/* ribbon */
.ribbon {
    flex: none;
    display: flex;
    padding: 5px 0 2px;
    border-bottom: 2px solid #dcdbda;
}

.group {
    display: flex;
    flex-direction: column;
    justify-content: space-between;
    height: 88px;
    padding: 2px 8px 0;
    border-right: 1px solid #c8c6c4;
}

.group.snug {
    padding: 2px 7px 0;
}

.group-items {
    display: flex;
    align-items: flex-start;
}

.roomy .group-items {
    gap: 1px;
}

.tool {
    display: flex;
    flex-direction: column;
    align-items: center;
    min-width: 40px;
    padding: 0 2px;
}

.tool svg {
    margin-bottom: 3px;
}

.tool.disabled {
    color: #a19f9d;
}

.caret {
    display: inline-block;
    width: 4px;
    height: 4px;
    margin: 0 2px 3px 4px;
    border-right: 1px solid var(--text);
    border-bottom: 1px solid var(--text);
    transform: rotate(45deg);
}

.small-tools {
    padding: 0 3px 0 4px;
}

.small-tools button {
    display: flex;
    align-items: center;
    gap: 4px;
    height: 24px;
}

.group-name {
    text-align: center;
    font-size: 10px;
    line-height: 10px;
}

.badge-x {
    font: 700 11px "Open Sans", sans-serif;
    fill: #fff;
}

.collapse {
    align-self: flex-end;
    margin: 0 4px 2px auto;
}

/* workspace */
.workspace {
    flex: 1;
    display: flex;
    min-height: 0;
}

.view-rail {
    width: 41px;
    border-right: 1px solid #e1dfdd;
}

.view-rail button {
    display: flex;
    align-items: center;
    justify-content: center;
    width: 100%;
    height: 40px;
    padding-right: 2px;
    border-left: 3px solid transparent;
}

.view-rail .active {
    border-color: var(--yellow);
}

.report {
    flex: 1;
    display: flex;
    flex-direction: column;
    min-width: 0;
}

.report-top {
    flex: 1;
    display: flex;
    min-height: 0;
    background: #fff;
}

.canvas {
    flex: 1;
    min-width: 0;
    padding: 0 9px 6px;
}

.report-page {
    height: 100%;
    padding: 0 0 0 8px;
    background:
        repeating-linear-gradient(#666 0 2px, transparent 2px 4px) left / 2px 100% no-repeat,
        repeating-linear-gradient(#666 0 2px, transparent 2px 4px) right / 2px 100% no-repeat,
        repeating-linear-gradient(90deg, #666 0 2px, transparent 2px 4px) bottom / 100% 2px no-repeat;
}

.chart {
    width: 100%;
    max-width: 772px;
    font-family: Roboto, sans-serif;
}

.frame {
    fill: none;
    stroke: #b5b3b1;
}

.chart-title {
    font-size: 12px;
    fill: #3b3a39;
}

.grid path {
    fill: none;
    stroke: #dddcdb;
    stroke-dasharray: 1 4;
}

.ticks-x, .ticks-y {
    font-size: 8px;
    fill: #777;
    text-anchor: middle;
}

.ticks-y {
    text-anchor: end;
}

.axis-name {
    font-size: 10px;
    fill: #252423;
    text-anchor: middle;
}

.bars {
    fill: var(--bar-blue);
}

.handles {
    fill: #999;
}

.visual-tools {
    display: flex;
    justify-content: flex-end;
    gap: 11px;
    max-width: 767px;
    padding-top: 4px;
}

/* filters */
.filters {
    flex: none;
    display: flex;
    flex-direction: column;
    width: 202px;
    border-left: 1px solid #a19f9d;
    border-right: 1px solid #e1dfdd;
}

.filters-head {
    flex: none;
    display: flex;
    align-items: center;
    height: 44px;
    padding: 0 11px;
}

.filters-head h2 {
    flex: 1;
    margin-left: 7px;
    font-size: 14px;
    font-weight: 600;
}

.filters-head button + button {
    margin-left: 20px;
}

.search {
    flex: none;
    display: flex;
    align-items: center;
    gap: 9px;
    height: 30px;
    margin: 8px 12px 4px 8px;
    padding-left: 10px;
    border: 1px solid #a19f9d;
    border-radius: 2px;
}

.search input {
    width: 100%;
}

.search input::placeholder {
    color: #484644;
}

.filter-list {
    flex: 1;
    position: relative;
    min-height: 0;
    overflow: hidden;
    padding: 16px 8px 0;
    border-top: 1px solid #a19f9d;
}

.filter-section {
    display: flex;
    justify-content: space-between;
    align-items: center;
    margin-bottom: 9px;
    padding-right: 3px;
}

.card {
    margin-bottom: 6px;
    padding: 4px;
    padding-left: 8px;
    border: 1px solid #c2c0be;
    border-radius: 2px;
    line-height: 18px;
    background: #fff;
}

.card.open {
    padding-bottom: 9px;
    background: var(--chrome);
}

.card.next {
    height: 46px;
}

.field-name {
    font-weight: 700;
}

.caption {
    display: flex;
    align-items: center;
    gap: 4px;
    margin: 8px 0 4px;
    line-height: 16px;
}

.show-items {
    margin-bottom: 8px;
}

.select-box {
    position: relative;
}

.select-box select, .value {
    display: block;
    width: 100%;
    height: 24px;
    padding: 0 6px;
    border: 1px solid #c2c0be;
    border-radius: 2px;
    background: #fff;
    appearance: none;
}

.select-box svg {
    position: absolute;
    right: 4px;
    top: 8px;
}

.value {
    height: 25px;
    margin-top: 4px;
}

.joiner {
    display: flex;
    gap: 8px;
    margin: 14px 0 12px;
    line-height: 16px;
}

.joiner label {
    display: flex;
    align-items: center;
    gap: 8px;
}

.joiner input {
    appearance: none;
    width: 12px;
    height: 12px;
    border: 1px solid #605e5c;
    border-radius: 50%;
}

.joiner input:checked {
    background: radial-gradient(circle, #252423 0 4px, #fff 4px);
}

.apply {
    display: block;
    margin: 9px 0 0 auto;
    line-height: 16px;
    color: #a19f9d;
}

.scroll-thumb {
    position: absolute;
    right: 0;
    top: 8px;
    width: 6px;
    height: 258px;
    border-radius: 3px;
    background: #d2d0ce;
}

/* page tabs */
.page-tabs {
    flex: none;
    display: flex;
    height: 35px;
    font-size: 12px;
}

.page-arrows {
    display: flex;
    justify-content: space-between;
    width: 40px;
    padding: 0 6px 0 5px;
    border-right: 1px solid #8a8886;
}

.page {
    width: 78px;
    border-right: 1px solid #c8c6c4;
}

.page.current {
    border-bottom: 3px solid #e9c832;
    padding-top: 3px;
    background: #fff;
}

.add-page {
    display: flex;
    align-items: center;
    justify-content: center;
    width: 39px;
    margin: 2px 0 1px;
    background: var(--yellow);
}

/* visualizations */
.visuals {
    flex: none;
    display: flex;
    flex-direction: column;
    width: 181px;
    border-right: 1px solid #d8d6d4;
}

.visuals-head {
    flex: none;
    display: flex;
    align-items: center;
    justify-content: space-between;
    height: 48px;
    padding: 0 12px;
}

.visuals h2, .fields h2 {
    font-size: 15px;
    font-weight: 500;
    color: #3b3a39;
    line-height: 20px;
}

.visual-grid {
    flex: none;
    display: grid;
    grid-template-columns: repeat(6, 28px);
    grid-auto-rows: 24px;
    padding: 2px 4px 0;
    border-bottom: 1px solid #dcdad8;
}

.visual-grid button {
    display: flex;
    align-items: center;
    justify-content: center;
    border: 2px solid transparent;
    margin: 1px 3px;
}

.visual-grid svg {
    width: 16px;
    height: 16px;
}

.visual-grid .picked {
    background: #c8c6c4;
    border-color: #605e5c;
}

.visual-grid b {
    font-size: 14px;
    color: #2478b0;
}

.ax { fill: none; stroke: #3b3a39; }
.bl { fill: none; stroke: #1f75b5; }
.b { fill: #71b2e9; stroke: #1f75b5; }
.g { fill: #b3b0ad; stroke: #77757a; }
.w { fill: #fff; stroke: #3b3a39; }
.o { fill: #efa347; }

.digits {
    font: 7px "Open Sans", sans-serif;
    fill: #1f75b5;
}

.pane-tabs {
    flex: none;
    display: flex;
    height: 36px;
    padding-left: 12px;
}

.pane-tabs button {
    display: flex;
    justify-content: center;
    width: 40px;
    padding-top: 7px;
}

.pane-tabs .active {
    border-bottom: 4px solid #e9c832;
    border-radius: 2px;
}

.wells {
    flex: 1;
    position: relative;
    min-height: 0;
    overflow: hidden;
    padding: 6px 6px 0 4px;
}

.wells .scroll-thumb {
    top: 0;
    height: 212px;
}

.wells h3 {
    margin: 0 0 5px 8px;
    font-size: 11px;
    font-weight: 400;
}

.well {
    height: 37px;
    margin-bottom: 11px;
    padding: 3px 2px;
    border: 1px dashed #c2c0be;
    background: #fff;
}

.well.empty {
    height: 28px;
    padding: 5px 10px;
}

.chip {
    display: flex;
    align-items: center;
    gap: 6px;
    height: 24px;
    padding: 0 3px 0 4px;
    border: 1px solid #c2c0be;
    border-radius: 2px;
    background: #eae8e7;
}

.chip button:first-of-type {
    margin-left: auto;
}

.wells h2 {
    margin: 15px 0 14px 10px;
}

.wells p {
    margin-left: 5px;
}

/* fields */
.fields {
    flex: none;
    display: flex;
    flex-direction: column;
    align-items: center;
    gap: 32px;
    width: 32px;
    padding-top: 15px;
}

.fields h2 {
    writing-mode: vertical-rl;
}

/* status bar */
.status-bar {
    flex: none;
    height: 24px;
    padding: 4px 5px;
    border-top: 1px solid #dcdad8;
    font-size: 12px;
}

/* taskbar */
.taskbar {
    flex: none;
    display: flex;
    height: 40px;
    border-top: 1px solid #24303f;
    color: #fff;
    background:
        linear-gradient(#ffffff55 0 1px, transparent 1px),
        radial-gradient(ellipse 60px 20px at 60px 14px, #33455acc, transparent),
        radial-gradient(ellipse 70px 14px at 205px 36px, #33455a99, transparent),
        radial-gradient(ellipse 60px 12px at 400px 4px, #33455a77, transparent),
        radial-gradient(ellipse 40px 14px at 625px 16px, #33455aaa, transparent),
        linear-gradient(90deg, #54718f 0, #7f9dbc 120px, #86a3c2 500px, #7d9cbf 640px, #5b728d 700px, #3d4753 790px, #29303c 870px, #141a25 980px, #0d141f 100%);
}

.apps {
    flex: 1;
    display: flex;
    gap: 2px;
}

.apps button {
    display: flex;
    align-items: center;
    justify-content: center;
    flex: none;
    width: 60px;
    height: 39px;
}

.apps svg {
    width: 32px;
    height: 32px;
}

.apps button:first-child {
    width: 57px;
}

.apps button:first-child svg {
    width: 37px;
    height: 37px;
}

.apps .running {
    border: 1px solid #1f2b3a;
    border-radius: 3px;
    background: linear-gradient(135deg, #ffffffbb, #ffffff33);
    box-shadow: inset 0 0 0 1px #ffffff88;
}

.apps .running:last-child {
    background: linear-gradient(135deg, #ffffff66, #ffffff22);
}

.apps .current {
    background: linear-gradient(135deg, #fff5df, #c9a765);
    box-shadow: inset 0 0 0 1px #fff3cf;
}

.logo-letter {
    font: 700 13px "Open Sans", sans-serif;
    fill: #fff;
}

.help-mark {
    font: 700 11px "Open Sans", sans-serif;
    fill: #fff;
}

.tray {
    display: flex;
    align-items: center;
    gap: 8px;
}

.tray .spaced {
    margin-left: 4px;
}

.clock {
    display: flex;
    flex-direction: column;
    align-items: center;
    width: 77px;
    padding-left: 3px;
}

.show-desktop {
    width: 14px;
    margin-left: 4px;
    border: 1px solid #6d7783;
    background: linear-gradient(135deg, #ffffff55, #ffffff11);
}

/* faint logo over the bottom right corner */
.brand-mark {
    position: absolute;
    right: 12px;
    bottom: 4px;
    display: flex;
    align-items: center;
    gap: 12px;
    font-size: 62px;
    line-height: 78px;
    pointer-events: none;
}

.brand-mark svg {
    opacity: 0.12;
}

.brand-mark span {
    opacity: 0.06;
}
```
